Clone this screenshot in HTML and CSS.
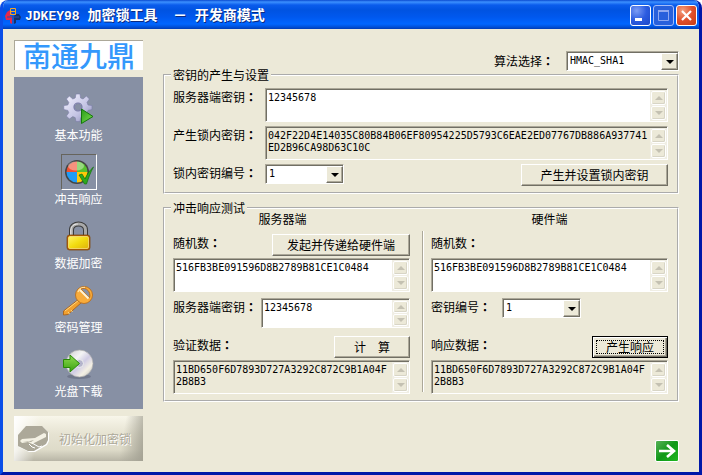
FILE: index.html
```html
<!DOCTYPE html>
<html lang="zh-CN">
<head>
<meta charset="utf-8">
<title>JDKEY98 加密锁工具 - 开发商模式</title>
<link rel="stylesheet" href="styles.css">
</head>
<body>
<div class="window">
  <header class="titlebar">
    <svg class="app-icon" width="16" height="16" viewBox="0 0 16 16" aria-hidden="true">
      <path d="M5 2 2 4 0 8l1 4h4v3l2 1V8H5V6h2z" fill="#e8284a"/>
      <path d="M11 6h3l2 3-1 3h-4v3l-2 1V8z" fill="#12306e"/>
      <path d="M8 8v8M2 9h12" stroke="#2a50a8" fill="none"/>
      <path d="M5.500.500h5v6h-5zM5.500 3.500h5" stroke="#f5a623" fill="none"/>
    </svg>
    <h1 class="title"><span class="title-latin">JDKEY98 </span>加密锁工具<span class="title-latin">  </span>－<span class="title-latin"> </span>开发商模式</h1>
    <div class="caption-buttons">
      <button class="caption" aria-label="最小化"><svg width="19" height="19" viewBox="0 0 19 19"><path d="M4 12h7v3H4z" fill="#fff"/></svg></button>
      <button class="caption caption-off" aria-label="最大化" disabled><svg width="19" height="19" viewBox="0 0 19 19"><path d="M4.500 5.500h10v9h-10z" fill="none" stroke="#8ea8f0"/><path d="M4 4h11v2H4z" fill="#8ea8f0"/></svg></button>
      <button class="caption caption-close" aria-label="关闭"><svg width="19" height="19" viewBox="0 0 19 19"><path d="m5 5 9 9m0-9-9 9" stroke="#fff" stroke-width="2.200"/></svg></button>
    </div>
  </header>

  <div class="content">
    <aside class="side">
      <div class="brand">南通九鼎</div>
      <nav class="nav">
        <button class="nav-item">
          <span class="nav-icon"><svg width="34" height="34" viewBox="0 0 34 34">
            <defs><linearGradient id="gear" x1="0" y1="0" x2="1" y2="1"><stop offset="0" stop-color="#f4f4ff"/><stop offset=".6" stop-color="#c4c4e4"/><stop offset="1" stop-color="#8888b4"/></linearGradient>
            <linearGradient id="play" x1="0" y1="0" x2="1" y2="1"><stop offset="0" stop-color="#2a9a18"/><stop offset="1" stop-color="#7ce050"/></linearGradient></defs>
            <path fill="url(#gear)" fill-rule="evenodd" stroke="#7a7ca6" stroke-width=".6" d="m14 3 4 0 .6 4 2.400 1 3.400-3 3 3-2.400 3.400 1 2.600 4 .6v4l-4 .8-1 2.400 2.400 3.200-3 3-3.200-2.400-2.400 1-.8 4h-4l-.8-4-2.400-1-3.400 2.400-3-3 2.400-3.200-1-2.400-4-.8v-4l4-.6 1-2.600L4.400 8l3-3 3.400 3 2.400-1zM16 12.500a3.500 3.500 0 1 0 .01 0z"/>
            <circle cx="16" cy="16" r="4" fill="none" stroke="#777aa4" stroke-width="1.200"/>
            <path d="m19.500 18 11.500 7.500-11.500 7z" fill="url(#play)" stroke="#14780c"/>
          </svg></span>
          <span>基本功能</span>
        </button>
        <button class="nav-item nav-selected">
          <span class="nav-icon"><svg width="34" height="34" viewBox="0 0 34 34">
            <circle cx="15" cy="17" r="12" fill="#444"/>
            <path d="M15 17V6.500A10.500 10.500 0 0 0 4.500 17z" fill="#f05030"/>
            <path d="M15 17V6.500A10.500 10.500 0 0 1 25.500 17z" fill="#58c030"/>
            <path d="M15 17v10.500A10.500 10.500 0 0 1 4.500 17z" fill="#209cf4"/>
            <path d="M15 17v10.500A10.500 10.500 0 0 0 25.500 17z" fill="#ffc808"/>
            <ellipse cx="14" cy="11" rx="8" ry="4.500" fill="#fff" opacity=".38"/>
            <path d="m17 20 3-1 3 5c2-5 5-9 8.500-12-3 5-5 11-7 17h-2z" fill="#2ca81c" stroke="#12700e" stroke-width=".7"/>
          </svg></span>
          <span>冲击响应</span>
        </button>
        <button class="nav-item">
          <span class="nav-icon"><svg width="34" height="34" viewBox="0 0 34 34">
            <defs><linearGradient id="lock" x1="0" y1="0" x2="1" y2="1"><stop offset="0" stop-color="#fff460"/><stop offset=".5" stop-color="#f2dc10"/><stop offset="1" stop-color="#e0b408"/></linearGradient></defs>
            <path d="M9.500 18v-7c0-8 14-8 14 0v7" fill="none" stroke="#3c3c3c" stroke-width="5"/>
            <path d="M9.500 18v-7c0-8 14-8 14 0v7" fill="none" stroke="#a8a8a8" stroke-width="3"/>
            <path d="M8.800 17v-6c.5-4 3-6 7-6" fill="none" stroke="#eee"/>
            <rect x="5" y="16" width="23" height="15" rx="2.500" fill="#b86408" stroke="#7c4404" stroke-width=".7"/>
            <rect x="6.500" y="17.500" width="20" height="12" rx="1.500" fill="url(#lock)" stroke="#ffee88" stroke-width=".7"/>
          </svg></span>
          <span>数据加密</span>
        </button>
        <button class="nav-item">
          <span class="nav-icon"><svg width="34" height="34" viewBox="0 0 34 34">
            <path d="m17 16 3 3L6 31.500l-4.500.5v-4z" fill="#f0a030" stroke="#a85c10" stroke-width=".8"/>
            <path d="m9 27 1.500 2M6 29l1.500 2M3 28 17 17" stroke="#ffd880" fill="none"/>
            <circle cx="22" cy="12" r="8.500" fill="#f8ac3c" stroke="#b86814" stroke-width=".8"/>
            <path d="M16 9c1-3 4-4.500 7-4.500" fill="none" stroke="#ffe0a0" stroke-width="1.500"/>
            <path d="M19 6c5-2.500 10.500 3 8.500 9z" fill="#8790a4" stroke="#c07018"/>
            <path d="m18 7 8.500 8.500" stroke="#fff4d8" stroke-width="2"/>
          </svg></span>
          <span>密码管理</span>
        </button>
        <button class="nav-item">
          <span class="nav-icon"><svg width="34" height="34" viewBox="0 0 34 34">
            <defs><linearGradient id="disc" x1="0" y1="0" x2="1" y2="1"><stop offset="0" stop-color="#c8c8cc"/><stop offset=".35" stop-color="#f4f4f4"/><stop offset=".55" stop-color="#d0cce4"/><stop offset=".75" stop-color="#f4f0e4"/><stop offset="1" stop-color="#b8b8b8"/></linearGradient>
            <linearGradient id="arrow" x1="0" y1="0" x2="0" y2="1"><stop offset="0" stop-color="#90dc50"/><stop offset="1" stop-color="#38a010"/></linearGradient></defs>
            <ellipse cx="17" cy="29.500" rx="12" ry="2.500" fill="#60687c" opacity=".6"/>
            <circle cx="17.500" cy="16.500" r="13.500" fill="url(#disc)" stroke="#aaa" stroke-width=".7"/>
            <circle cx="17.500" cy="16.500" r="4" fill="#b4b4cc" stroke="#eee"/>
            <path d="M1.500 12.500H8V8l9.500 8.500L8 25v-4.500H1.500z" fill="url(#arrow)" stroke="#2a8808"/>
          </svg></span>
          <span>光盘下载</span>
        </button>
      </nav>
      <button class="init" disabled>
        <svg width="34" height="28" viewBox="0 0 34 28" aria-hidden="true">
          <path d="M10 2h16l6 6v8l-2 4-12 7h-6L2 22V11z" fill="#fff"/>
          <path d="M9 1h16l6 6v8l-2 4-12 7h-6L1 21V10z" fill="#aca899"/>
          <path d="m3 16 2-2 13-1 9-5 2 1v3l-8 4-6 3-4-2-6 1z" fill="#f4f1e4"/>
          <path d="m6 17 7-1 4-1-3 2-4-1z" fill="#aca899"/>
          <path d="m15 18 7 4 3-1M12 19l3 3 3 1" fill="none" stroke="#fff"/>
        </svg>
        <span>初始化加密锁</span>
      </button>
    </aside>

    <main class="main">
      <div class="algo">
        <label for="algo">算法选择<span class="colon" lang="zh-TW">：</span></label>
        <span class="combo combo-wide"><select id="algo"><option>HMAC_SHA1</option></select><span class="drop" aria-hidden="true"></span></span>
      </div>

      <fieldset class="group">
        <legend>密钥的产生与设置</legend>
        <div class="key-grid">
          <label for="serverKey">服务器端密钥<span class="colon" lang="zh-TW">：</span></label>
          <div class="memo"><textarea id="serverKey">12345678</textarea><span class="bar" aria-hidden="true"><i class="up"></i><i class="down"></i></span></div>
          <label for="lockKey">产生锁内密钥<span class="colon" lang="zh-TW">：</span></label>
          <div class="memo memo-readonly"><textarea id="lockKey" readonly>042F22D4E14035C80B84B06EF80954225D5793C6EAE2ED07767DB886A937741ED2B96CA98D63C10C</textarea><span class="bar" aria-hidden="true"><i class="up"></i><i class="down"></i></span></div>
          <label for="lockNo">锁内密钥编号<span class="colon" lang="zh-TW">：</span></label>
          <div class="row">
            <span class="combo"><select id="lockNo"><option>1</option></select><span class="drop" aria-hidden="true"></span></span>
            <button class="btn btn-set">产生并设置锁内密钥</button>
          </div>
        </div>
      </fieldset>

      <fieldset class="group group-test">
        <legend>冲击响应测试</legend>
        <div class="panes">
          <section class="pane">
            <h2 class="pane-title pane-title-server">服务器端</h2>
            <div class="row">
              <label for="rand1">随机数<span class="colon" lang="zh-TW">：</span></label>
              <button class="btn btn-send">发起并传递给硬件端</button>
            </div>
            <div class="memo"><textarea id="rand1">516FB3BE091596D8B2789B81CE1C0484</textarea><span class="bar" aria-hidden="true"><i class="up"></i><i class="down"></i></span></div>
            <div class="row row-key">
              <label for="key2">服务器端密钥<span class="colon" lang="zh-TW">：</span></label>
              <div class="memo memo-short"><textarea id="key2">12345678</textarea><span class="bar" aria-hidden="true"><i class="up"></i><i class="down"></i></span></div>
            </div>
            <div class="row">
              <label for="verify">验证数据<span class="colon" lang="zh-TW">：</span></label>
              <button class="btn btn-small">计　算</button>
            </div>
            <div class="memo memo-readonly"><textarea id="verify" readonly>11BD650F6D7893D727A3292C872C9B1A04F2B8B3</textarea><span class="bar" aria-hidden="true"><i class="up"></i><i class="down"></i></span></div>
          </section>
          <div class="divider"></div>
          <section class="pane">
            <h2 class="pane-title">硬件端</h2>
            <div class="row">
              <label for="rand2">随机数<span class="colon" lang="zh-TW">：</span></label>
            </div>
            <div class="memo"><textarea id="rand2">516FB3BE091596D8B2789B81CE1C0484</textarea><span class="bar" aria-hidden="true"><i class="up"></i><i class="down"></i></span></div>
            <div class="row row-key">
              <label class="label-no" for="keyNo">密钥编号<span class="colon" lang="zh-TW">：</span></label>
              <span class="combo"><select id="keyNo"><option>1</option></select><span class="drop" aria-hidden="true"></span></span>
            </div>
            <div class="row">
              <label for="resp">响应数据<span class="colon" lang="zh-TW">：</span></label>
              <button class="btn btn-small btn-default">产生响应</button>
            </div>
            <div class="memo memo-readonly"><textarea id="resp" readonly>11BD650F6D7893D727A3292C872C9B1A04F2B8B3</textarea><span class="bar" aria-hidden="true"><i class="up"></i><i class="down"></i></span></div>
          </section>
        </div>
      </fieldset>

      <button class="next" aria-label="下一步"><svg width="22" height="20" viewBox="0 0 22 20"><path d="M3 10h15M11 4l7 6-7 6" fill="none" stroke="#fff" stroke-width="2.600"/></svg></button>
    </main>
  </div>
</div>
</body>
</html>
```
FILE: styles.css
```css
* { box-sizing: border-box; }

body {
  margin: 0;
  background: #fff;
  color: #000;
  font: 12px/18px "Noto Sans CJK SC", sans-serif;
}

button, select, textarea {
  margin: 0;
  padding: 0;
  border: 0;
  border-radius: 0;
  background: none;
  color: inherit;
  font: inherit;
}

svg { display: block; flex: none; }

.window {
  display: flex;
  flex-direction: column;
  min-height: 100vh;
  border: solid;
  border-width: 0 3px 3px;
  border-color: #0a4ee8 #0018a8 #0018a8 #0a4ee8;
  border-radius: 8px 8px 0 0;
  background: #ece9d8;
  overflow: hidden;
}

/* Title bar */
.titlebar {
  display: flex;
  align-items: center;
  gap: 4px;
  height: 29px;
  margin: 0 -3px;
  padding: 2px 5px 0;
  background: linear-gradient(#0a4ad0 0, #3c90ff 2px, #0a5cec 5px, #0053e1 10px, #0058ee 17px, #0066ff 24px, #0050d8 27px, #003cb4 29px);
}

.title {
  flex: 1;
  margin: 0;
  color: #fff;
  font-size: 14px;
  font-weight: 700;
  line-height: 20px;
  white-space: pre;
  text-shadow: 1px 1px #0a2a80;
}

.title-latin { font-family: "Liberation Mono", monospace; font-size: 13px; }

.caption-buttons { display: flex; gap: 2px; }

.caption {
  width: 21px;
  height: 21px;
  border: 1px solid #fff;
  border-radius: 3px;
  background: radial-gradient(circle at 30% 25%, #7c9cf4, #2c5ce0 50%, #1c48c8);
}

.caption-off { border-color: #a4bcf8; background: #2860dc; }
.caption-close { background: radial-gradient(circle at 30% 25%, #f4a080, #e0502c 50%, #c83c14); }

/* Content */
.content {
  display: flex;
  flex: 1;
  gap: 20px;
  padding: 11px 20px 10px 11px;
}

.side { display: flex; flex-direction: column; flex: none; width: 129px; }

.brand {
  height: 30px;
  border-top: 1px solid #aca899;
  border-left: 1px solid #aca899;
  background: #fff;
  color: #3498fc;
  font-size: 28px;
  font-weight: 500;
  line-height: 28px;
  text-align: center;
}

.nav {
  display: flex;
  flex-direction: column;
  gap: 10px;
  height: 332px;
  margin-top: 7px;
  padding-top: 13px;
  background: #8790a4;
}

.nav-item {
  display: flex;
  flex-direction: column;
  align-items: center;
  width: 100%;
  color: #fff;
}

.nav-icon { padding: 1px; }

.nav-selected .nav-icon {
  padding: 0;
  border: 1px solid;
  border-color: #66645c #fff #fff #66645c;
}

.init {
  display: flex;
  align-items: center;
  gap: 8px;
  height: 45px;
  margin-top: 7px;
  padding-left: 3px;
  background: linear-gradient(100deg, #fff 0, rgb(255 255 255 / 0) 20%, rgb(0 0 0 / 0) 82%, #a4a294 100%), linear-gradient(#f8f6ea 0, #e6e3d2 40%, #dedbc9 75%, #b8b5a6 100%);
  color: #aca899;
  text-shadow: 1px 1px #fff;
}

.main { display: flex; flex-direction: column; flex: 1; min-width: 0; padding-top: 11px; }

.colon { font-family: "Noto Sans CJK TC", sans-serif; font-weight: 700; }

.algo { display: flex; justify-content: flex-end; align-items: center; gap: 12px; height: 20px; }

.group {
  min-width: 0;
  margin: 0;
  padding: 9px 9px 6px 8px;
  border: 2px groove #fff;
}

.group-test { margin-top: 10px; padding: 0 9px 6px 8px; }

legend { margin-left: -2px; padding: 0 2px; line-height: 8px; }

.key-grid { display: grid; grid-template-columns: 92px 1fr; row-gap: 4px; }

.row { display: flex; justify-content: space-between; height: 22px; }

/* Edit boxes */
.memo {
  display: flex;
  height: 34px;
  border: 1px solid;
  border-color: #aca899 #fff #fff #aca899;
  box-shadow: inset 1px 1px #716f64;
  background: #fff;
}

.memo-readonly { background: #ece9d8; }

.memo textarea {
  flex: 1;
  min-width: 0;
  padding: 3px 0 0 2px;
  outline: 0;
  overflow: hidden;
  resize: none;
  font: 10px/12px "DejaVu Sans Mono", monospace;
  word-break: break-all;
}

.bar {
  display: flex;
  flex-direction: column;
  gap: 1px;
  width: 17px;
  margin-top: 1px;
  padding: 1px;
  background: #f0eee4;
}

.bar i {
  display: flex;
  align-items: center;
  justify-content: center;
  flex: 1;
  border: 1px solid #fff;
  border-radius: 2px;
  background: #ece9d8;
  box-shadow: inset -1px -1px #d8d5c6;
}

.bar i::before { content: ""; border: 4px solid transparent; }
.bar .up::before { border-bottom-color: #c4c1b2; border-top-width: 0; }
.bar .down::before { border-top-color: #c4c1b2; border-bottom-width: 0; }

.combo {
  display: flex;
  width: 79px;
  height: 20px;
  border: 1px solid;
  border-color: #aca899 #fff #fff #aca899;
  box-shadow: inset 1px 1px #716f64;
  background: #fff;
}

.combo-wide { width: 113px; }

.combo select {
  flex: 1;
  min-width: 0;
  padding-left: 3px;
  appearance: none;
  outline: 0;
  font: 10px/18px "DejaVu Sans Mono", monospace;
}

.drop {
  display: flex;
  align-items: center;
  justify-content: center;
  width: 17px;
  margin-top: 1px;
  border: 1px solid;
  border-color: #fff #716f64 #716f64 #fff;
  background: #ece9d8;
  box-shadow: inset -1px -1px #aca899;
}

.drop::before { content: ""; border: 4px solid transparent; border-top-color: #000; border-bottom: 0; }

/* Push buttons */
.btn {
  height: 22px;
  border: 1px solid;
  border-color: #fff #716f64 #716f64 #fff;
  background: #ece9d8;
  box-shadow: inset -1px -1px #aca899;
  line-height: 18px;
  white-space: nowrap;
}

.btn-set { width: 147px; }
.btn-send { width: 138px; }
.btn-small { width: 76px; }

.btn-default {
  border-color: #000;
  box-shadow: inset 1px 1px #fff, inset -1px -1px #716f64, inset -2px -2px #aca899;
  outline: 1px dotted #000;
  outline-offset: -5px;
}

/* Test panes */
.panes { display: flex; }
.pane { flex: 1; min-width: 0; }
.pane-title { margin: 0 0 8px; font-size: 12px; font-weight: 400; line-height: 14px; text-align: center; }
.pane-title-server { padding-right: 18px; }
.pane .memo { margin-top: 2px; }
.pane .row-key { height: 30px; margin: 6px 0 8px; }
.row-key .memo-short { width: 149px; height: 30px; margin-top: 0; }
.row-key:has(.combo) { justify-content: flex-start; }
.label-no { width: 71px; }

.divider {
  width: 2px;
  margin: 19px 7px 2px 12px;
  border-left: 1px solid #aca899;
  border-right: 1px solid #fff;
}

.next {
  align-self: flex-end;
  margin-top: auto;
  border: 1px solid #fff;
  border-radius: 2px;
  background: linear-gradient(135deg, #58b058, #109818 50%, #20b820);
}
```
